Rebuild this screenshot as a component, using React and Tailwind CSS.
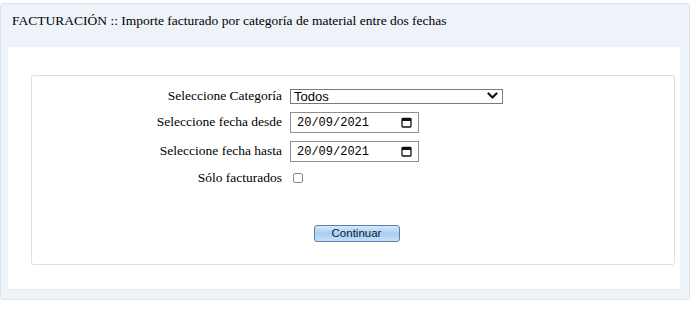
import React from "react";

const serif = { fontFamily: '"Liberation Serif", "Times New Roman", serif' };

const Chevron = () => (
    <svg width="11" height="8" viewBox="0 0 11 8" aria-hidden="true">
        <path d="M1.5 1.5 5.5 5.5 9.5 1.5" fill="none" stroke="#111" strokeWidth="2.2" strokeLinecap="round" strokeLinejoin="round" />
    </svg>
);

const CalendarIcon = () => (
    <svg width="11" height="11" viewBox="0 0 11 11" aria-hidden="true">
        <rect x="1" y="1.5" width="9" height="8.5" fill="none" stroke="#111" strokeWidth="1.3" rx="0.8" />
        <rect x="1" y="1.5" width="9" height="2.5" fill="#111" />
    </svg>
);

const DateField = ({ value }) => (
    <div className="w-[129px] h-[21px] border border-[#8f8f8f] bg-white flex items-center justify-between pl-[6px] pr-[6px]">
        <span className="text-[12px] text-black" style={{ fontFamily: '"Liberation Mono", "Courier New", monospace' }}>
            {value}
        </span>
        <CalendarIcon />
    </div>
);

const Row = ({ label, className = "", children }) => (
    <div className={`flex items-center ${className}`}>
        <div className="w-[258px] text-right text-[13.5px] text-black pr-[8px]" style={serif}>
            {label}
        </div>
        {children}
    </div>
);

export default function App() {
    return (
        <div className="w-[697px] h-[310px] bg-white pt-[3px]">
            <div className="w-[690px] h-[297px] border border-[#dde3ec] rounded-[3px] bg-[#eef2f9] flex flex-col">
                {/* Header */}
                <div className="h-[43px] pt-[9px] pl-[11px] text-[13.5px] leading-[16px] text-black" style={serif}>
                    FACTURACIÓN :: Importe facturado por categoría de material entre dos fechas
                </div>

                {/* White body */}
                <div className="ml-[7px] w-[672px] h-[243px] bg-white border-b border-[#e3e8f0] pt-[28px] pl-[23px]">
                    <div className="w-[644px] h-[190px] border border-[#dcdfe3] rounded-[3px] flex flex-col">
                        <Row label="Seleccione Categoría" className="mt-[12px] h-[16px]">
                            <div className="w-[213px] h-[15px] border border-[#7a7a7a] bg-white flex items-center justify-between pl-[3px] pr-[4px]">
                                <span className="text-[13px] leading-none text-black" style={{ fontFamily: '"Liberation Sans", Arial, sans-serif' }}>
                                    Todos
                                </span>
                                <Chevron />
                            </div>
                        </Row>
                        <Row label="Seleccione fecha desde" className="mt-[6px] h-[25px]">
                            <DateField value="20/09/2021" />
                        </Row>
                        <Row label="Seleccione fecha hasta" className="mt-[4px] h-[25px]">
                            <DateField value="20/09/2021" />
                        </Row>
                        <Row label="Sólo facturados" className="mt-[2px] h-[24px]">
                            <span className="ml-[3px] w-[10px] h-[10px] border border-[#8a8a8a] rounded-[2px] bg-white" />
                        </Row>

                        <div className="mt-[35px] flex justify-center pl-[7px]">
                            <button
                                type="button"
                                className="w-[86px] h-[17px] border border-[#5f7fa6] rounded-[3px] bg-gradient-to-b from-[#d7e9fb] via-[#a9cff2] to-[#c4e0fa] text-[11.5px] leading-none text-[#0d1b33] flex items-center justify-center"
                                style={{ fontFamily: '"Liberation Sans", Arial, sans-serif' }}
                            >
                                Continuar
                            </button>
                        </div>
                    </div>
                </div>
            </div>
        </div>
    );
}
